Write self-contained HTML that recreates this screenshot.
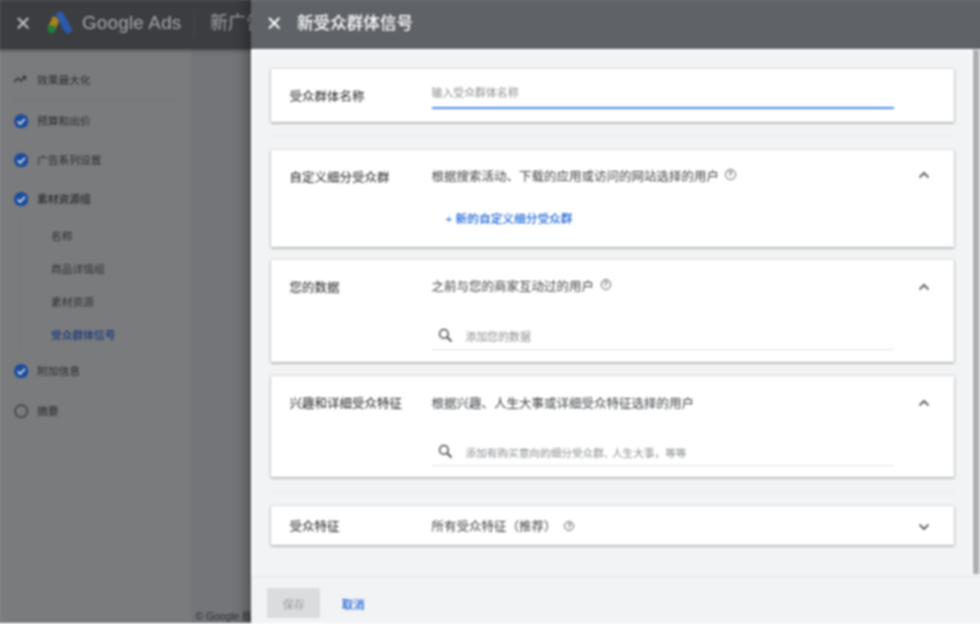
<!DOCTYPE html>
<html lang="zh-CN">
<head>
<meta charset="utf-8">
<title>新受众群体信号</title>
<style>
*{box-sizing:border-box;margin:0;padding:0}
html{width:980px;height:624px;overflow:hidden;background:#737579}
body{position:absolute;left:-16px;top:-16px;width:1012px;height:656px;overflow:hidden;filter:blur(.8px);font-family:"Liberation Sans","Noto Sans CJK SC",sans-serif;}
#stage{position:absolute;left:16px;top:16px;width:980px;height:624px}
#bg{position:absolute;left:0;top:0;width:980px;height:624px;}
#bgfill{position:absolute;left:-16px;top:-16px;width:1012px;height:656px;background:#737579}
#bgheadfill{position:absolute;left:-16px;top:-16px;width:1012px;height:65px;background:#3b3d41;box-shadow:0 1px 4px rgba(0,0,0,.45);z-index:2}
#bghead{position:absolute;left:0;top:0;width:980px;height:49px;z-index:3}
#bgnav{position:absolute;left:-16px;top:49px;width:207px;height:600px;background:#7a7b7d;}
.x{position:absolute}
.bgx{position:absolute;left:17.4px;top:17.2px;width:12.2px;height:12.2px}
.logo{position:absolute;left:46px;top:10px;width:28px;height:26px}
.gads{position:absolute;left:82px;top:11px;font-size:18.85px;line-height:24px;color:#a6a8ab;letter-spacing:.2px;white-space:nowrap}
.vsep{position:absolute;left:194px;top:10px;width:1px;height:26px;background:#42454a}
.camp{position:absolute;left:210px;top:11px;font-size:18px;line-height:24px;color:#9fa1a4;white-space:nowrap}
.nav{position:absolute;left:37px;font-size:10.75px;line-height:14px;color:#2b2c2e;white-space:nowrap}
.nav.sub{left:51px;color:#303133}
.nav.act{color:#183a7c;font-weight:500}
.chk{position:absolute;left:13.5px;width:14.4px;height:14.4px;margin-top:-.5px}
.navline{position:absolute;left:13px;top:100px;width:165px;height:1px;background:#727375}
.subline{position:absolute;left:20px;top:218px;width:1px;height:134px;background:#747680}
.copy{position:absolute;left:195.5px;top:610.8px;font-size:10.3px;line-height:12px;color:#2e2f31;white-space:nowrap}
#panel{position:absolute;left:251px;top:0;width:729px;height:624px;z-index:5}
#pfill{position:absolute;left:0;top:-16px;width:745px;height:656px;background:#f1f3f4;box-shadow:-3px 0 14px rgba(0,0,0,.38)}
#phead{position:absolute;left:0;top:0;width:729px;height:49px;}
#pheadfill{position:absolute;left:0;top:-16px;width:745px;height:65px;background:#5f6368}
.px{position:absolute;left:16.6px;top:17px;width:12.4px;height:12.4px}
.ptitle{position:absolute;left:46px;top:12px;font-size:16.6px;line-height:24px;color:#fff;white-space:nowrap;font-weight:500}
.edgeT{position:absolute;left:0;top:49px;width:720px;height:3px;background:linear-gradient(#fff,#f5f6f7)}
.edgeL{position:absolute;left:0;top:49px;width:3px;height:575px;background:linear-gradient(90deg,#fff,#f5f6f7)}
.sbar{position:absolute;left:719.6px;top:50px;width:25.4px;height:523.5px;background:#adaeb0;border-left:2.7px solid #fafbfc;border-right:17px solid #e6e7e8}
.card{position:absolute;left:19.5px;width:683.5px;background:#fff;box-shadow:0 1px 2.5px rgba(0,0,0,.36),0 0 1.5px rgba(0,0,0,.18);}
.hr{position:absolute;left:20px;width:683px;height:1.5px;background:#e7e9eb}
.lbl{position:absolute;left:19px;font-size:12.5px;line-height:16px;color:#202225;white-space:nowrap}
.desc{position:absolute;left:161px;font-size:12.5px;line-height:16px;color:#3e4246;white-space:nowrap}
.ph{position:absolute;font-size:10.9px;line-height:14px;color:#8a8d91;white-space:nowrap}
.help{position:absolute;width:10.6px;height:10.6px;border:1.2px solid #5d6165;border-radius:50%;font-size:7.6px;line-height:8.4px;text-align:center;color:#4a4d51;font-weight:bold;margin:.5px 0 0 .5px}
.chev{position:absolute;left:646px;width:14px;height:10px}
.uline{position:absolute;left:161px;width:462px;height:1px;background:#e2e4e6}
.mag{position:absolute;left:167px;width:15px;height:15px}
#foot{position:absolute;left:0;top:575.6px;width:745px;height:66px;background:#f1f3f4;border-top:1.3px solid #e6e8e9}
.save{position:absolute;left:16.2px;top:11.7px;width:53.2px;height:29.6px;background:#dbdcde;border-radius:2px;color:#96999d;font-size:11px;line-height:34px;text-align:center}
.cancel{position:absolute;left:90.8px;top:11.7px;font-size:11.5px;line-height:34px;color:#1b63d6;font-weight:500;white-space:nowrap}
</style>
</head>
<body>
<div id="stage">
<div id="bg">
  <div id="bgfill"></div>
  <div id="bgheadfill"></div>
  <div id="bghead">
    <svg class="bgx" viewBox="0 0 13 13"><path d="M1 1 L12 12 M12 1 L1 12" stroke="#bfc0c2" stroke-width="2.2" fill="none"/></svg>
    <svg class="logo" viewBox="0 0 28 26">
      <path d="M10.5 7.5 L5.5 18.5" stroke="#a8841a" stroke-width="7.6" stroke-linecap="butt" fill="none"/>
      <path d="M14 5.5 L22 19.5" stroke="#2c59aa" stroke-width="7.8" stroke-linecap="round" fill="none"/>
      <circle cx="5.6" cy="19.2" r="3.9" fill="#1f7f39"/>
    </svg>
    <div class="gads">Google Ads</div>
    <div class="vsep"></div>
    <div class="camp">新广告系列</div>
  </div>
  <div id="bgnav"></div>
  <svg class="x" style="left:13px;top:74px;width:14px;height:12px" viewBox="0 0 14 12"><path d="M1 8 L5 4 L8 7 L12 3 M9.5 2.5 L12.5 2.5 L12.5 5.5" stroke="#2e3032" stroke-width="1.4" fill="none"/></svg>
  <div class="nav" style="top:73px">效果最大化</div>
  <div class="navline"></div>
  <svg class="chk" style="top:114px" viewBox="0 0 14 14"><circle cx="7" cy="7" r="7" fill="#1a4c9e"/><path d="M3.6 7.2 L6 9.6 L10.6 4.8" stroke="#c9d1e0" stroke-width="1.9" fill="none"/></svg>
  <div class="nav" style="top:114px">预算和出价</div>
  <svg class="chk" style="top:153px" viewBox="0 0 14 14"><circle cx="7" cy="7" r="7" fill="#1a4c9e"/><path d="M3.6 7.2 L6 9.6 L10.6 4.8" stroke="#c9d1e0" stroke-width="1.9" fill="none"/></svg>
  <div class="nav" style="top:153px">广告系列设置</div>
  <svg class="chk" style="top:192px" viewBox="0 0 14 14"><circle cx="7" cy="7" r="7" fill="#1a4c9e"/><path d="M3.6 7.2 L6 9.6 L10.6 4.8" stroke="#c9d1e0" stroke-width="1.9" fill="none"/></svg>
  <div class="nav" style="top:192px;font-weight:500">素材资源组</div>
  <div class="subline"></div>
  <div class="nav sub" style="top:229px">名称</div>
  <div class="nav sub" style="top:262px">商品详情组</div>
  <div class="nav sub" style="top:295px">素材资源</div>
  <div class="nav sub act" style="top:328px">受众群体信号</div>
  <svg class="chk" style="top:364px" viewBox="0 0 14 14"><circle cx="7" cy="7" r="7" fill="#1a4c9e"/><path d="M3.6 7.2 L6 9.6 L10.6 4.8" stroke="#c9d1e0" stroke-width="1.9" fill="none"/></svg>
  <div class="nav" style="top:364px">附加信息</div>
  <svg class="chk" style="top:404px" viewBox="0 0 14 14"><circle cx="7" cy="7" r="6" fill="none" stroke="#3a3c3f" stroke-width="1.4"/></svg>
  <div class="nav" style="top:404px">摘要</div>
  <div class="copy">© Google 版权所有</div>
</div>

<div id="panel">
  <div id="pfill"></div>
  <div id="pheadfill"></div>
  <div id="phead">
    <svg class="px" viewBox="0 0 12 12"><path d="M1 1 L11 11 M11 1 L1 11" stroke="#fff" stroke-width="2" fill="none"/></svg>
    <div class="ptitle">新受众群体信号</div>
  </div>
  <div class="edgeT"></div><div class="edgeL"></div>
  <div class="sbar"></div>

  <div class="card" style="top:69px;height:53px">
    <div class="lbl" style="top:20px">受众群体名称</div>
    <div class="ph" style="left:161px;top:17px">输入受众群体名称</div>
    <div style="position:absolute;left:161px;top:37.5px;width:462px;height:2.4px;background:#4c8af4"></div>
  </div>
  <div class="hr" style="top:134.5px"></div>

  <div class="card" style="top:149.5px;height:97.5px">
    <div class="lbl" style="top:20px">自定义细分受众群</div>
    <div class="desc" style="top:19px">根据搜索活动、下载的应用或访问的网站选择的用户</div>
    <div class="help" style="left:454px;top:19px">?</div>
    <svg class="chev" style="top:20.7px" viewBox="0 0 14 10"><path d="M2.5 7.5 L7 3 L11.5 7.5" stroke="#3c4043" stroke-width="1.65" fill="none"/></svg>
    <div class="ph" style="left:175px;top:62.5px;font-size:11.7px;color:#1b63d6;font-weight:500">+ 新的自定义细分受众群</div>
  </div>

  <div class="card" style="top:260.3px;height:101.8px">
    <div class="lbl" style="top:20px">您的数据</div>
    <div class="desc" style="top:19px">之前与您的商家互动过的用户</div>
    <div class="help" style="left:329.5px;top:18.5px">?</div>
    <svg class="chev" style="top:22px" viewBox="0 0 14 10"><path d="M2.5 7.5 L7 3 L11.5 7.5" stroke="#3c4043" stroke-width="1.65" fill="none"/></svg>
    <svg class="mag" style="top:68px" viewBox="0 0 15 15"><circle cx="5.9" cy="5.9" r="4.3" stroke="#44484c" stroke-width="1.5" fill="none"/><path d="M9 9 L13.6 13.6" stroke="#44484c" stroke-width="1.8" fill="none"/></svg>
    <div class="ph" style="left:195px;top:70px">添加您的数据</div>
    <div class="uline" style="top:89px"></div>
  </div>

  <div class="card" style="top:375.5px;height:101.7px">
    <div class="lbl" style="top:20.5px">兴趣和详细受众特征</div>
    <div class="desc" style="top:20.5px">根据兴趣、人生大事或详细受众特征选择的用户</div>
    <svg class="chev" style="top:22px" viewBox="0 0 14 10"><path d="M2.5 7.5 L7 3 L11.5 7.5" stroke="#3c4043" stroke-width="1.65" fill="none"/></svg>
    <svg class="mag" style="top:68.5px" viewBox="0 0 15 15"><circle cx="5.9" cy="5.9" r="4.3" stroke="#44484c" stroke-width="1.5" fill="none"/><path d="M9 9 L13.6 13.6" stroke="#44484c" stroke-width="1.8" fill="none"/></svg>
    <div class="ph" style="left:195px;top:70.5px;font-size:10.65px">添加有购买意向的细分受众群<span style="letter-spacing:-2.5px">、</span>人生大事，等等</div>
    <div class="uline" style="top:89px"></div>
  </div>
  <div class="hr" style="top:490.5px"></div>

  <div class="card" style="top:506px;height:39.3px">
    <div class="lbl" style="top:13.4px">受众特征</div>
    <div class="desc" style="top:13.4px">所有受众特征（推荐）</div>
    <div class="help" style="left:293.3px;top:14.8px;width:10px;height:10px;font-size:7px;line-height:8px">?</div>
    <svg class="chev" style="top:16px" viewBox="0 0 14 10"><path d="M2.5 2.5 L7 7 L11.5 2.5" stroke="#3c4043" stroke-width="1.65" fill="none"/></svg>
  </div>

  <div id="foot">
    <div class="save">保存</div>
    <div class="cancel">取消</div>
  </div>
</div>
<div style="position:absolute;left:-16px;top:622.7px;width:1012px;height:17.6px;background:#fdfdfd;z-index:20"></div>
<div style="position:absolute;left:-16px;top:-16px;width:1012px;height:17.2px;background:rgba(255,255,255,.09);z-index:20"></div>
<div style="position:absolute;left:-16px;top:-16px;width:17.2px;height:638.4px;background:rgba(255,255,255,.07);z-index:20"></div>
</div>
</body>
</html>
